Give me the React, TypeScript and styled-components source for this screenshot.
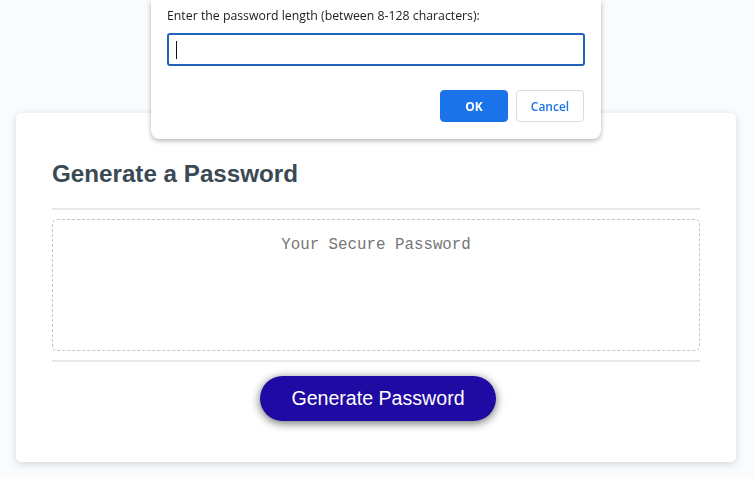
import React from "react";
import styled, { createGlobalStyle } from "styled-components";

const Global = createGlobalStyle`
  *, *::before, *::after { box-sizing: border-box; }
  html, body { margin: 0; padding: 0; }
  body {
    background: #f9fbfd;
    font-family: "Liberation Sans", Arial, sans-serif;
  }
`;

const Page = styled.div`
  padding: 113px 18px 14px 16px;
`;

const Card = styled.section`
  width: 720px;
  background: #ffffff;
  border-radius: 5px;
  box-shadow: rgba(0, 0, 0, 0.15) 0 2px 8px 0;
  padding: 47px 36px 41px;
  color: hsl(206, 17%, 28%);
`;

const Heading = styled.h2`
  margin: 0 0 20px;
  font-family: "Liberation Sans", Arial, sans-serif;
  font-size: 24.2px;
  line-height: 28px;
  font-weight: 700;
`;

const Divider = styled.div`
  height: 2px;
  background: #e7e9eb;
`;

const PasswordBox = styled.textarea`
  display: block;
  width: 100%;
  height: 132px;
  margin: 9px 0;
  padding: 15px 15px 0;
  border: 1px dashed #c0c7cf;
  border-radius: 5px;
  resize: none;
  overflow: hidden;
  text-align: center;
  font-family: "Liberation Mono", "DejaVu Sans Mono", monospace;
  font-size: 15.8px;
  line-height: 20px;
  color: #333;
  &::placeholder { color: #767676; }
`;

const Footer = styled.div`
  display: flex;
  justify-content: center;
  padding: 14px 0 0 4px;
`;

const GenerateButton = styled.button`
  border: none;
  background: #1f0aa3;
  border-radius: 25px;
  box-shadow: 0 2px 10px rgba(0, 0, 0, 0.6);
  color: #ffffff;
  font-family: "Liberation Sans", Arial, sans-serif;
  font-size: 19.6px;
  line-height: 23px;
  padding: 11px 31px;
  cursor: pointer;
`;

const Dialog = styled.div`
  position: fixed;
  top: 0;
  left: 151px;
  width: 450px;
  background: #ffffff;
  border-radius: 0 0 8px 8px;
  box-shadow: 0 2px 5px rgba(0, 0, 0, 0.28), 0 0 1px rgba(0, 0, 0, 0.2);
  padding: 7px 16px 17px;
  font-family: "Open Sans", "Noto Sans", sans-serif;
`;

const DialogText = styled.div`
  font-size: 12.3px;
  line-height: 18px;
  color: #202124;
`;

const DialogInput = styled.div`
  margin-top: 8px;
  height: 33px;
  border: 2px solid #1f64b8;
  border-radius: 3px;
  display: flex;
  align-items: center;
  padding-left: 7px;
`;

const Caret = styled.span`
  width: 1px;
  height: 18px;
  background: #111;
`;

const DialogActions = styled.div`
  display: flex;
  justify-content: flex-end;
  gap: 8px;
  margin-top: 24px;
  padding-right: 1px;
`;

const DialogButton = styled.button<{ $primary?: boolean }>`
  width: 68px;
  height: 32px;
  border-radius: 4px;
  font-family: "Open Sans", "Noto Sans", sans-serif;
  font-size: 12px;
  font-weight: ${(p) => (p.$primary ? 700 : 600)};
  color: ${(p) => (p.$primary ? "#ffffff" : "#1a73e8")};
  background: ${(p) => (p.$primary ? "#1a73e8" : "#ffffff")};
  border: 1px solid ${(p) => (p.$primary ? "#1a73e8" : "#dadce0")};
  padding: 0;
  cursor: pointer;
`;

export default function App() {
  return (
    <>
      <Global />
      <Page>
        <Card>
          <Heading>Generate a Password</Heading>
          <Divider />
          <PasswordBox readOnly placeholder="Your Secure Password" aria-label="Generated Password" />
          <Divider />
          <Footer>
            <GenerateButton>Generate Password</GenerateButton>
          </Footer>
        </Card>
      </Page>
      <Dialog>
        <DialogText>Enter the password length (between 8-128 characters):</DialogText>
        <DialogInput>
          <Caret />
        </DialogInput>
        <DialogActions>
          <DialogButton $primary>OK</DialogButton>
          <DialogButton>Cancel</DialogButton>
        </DialogActions>
      </Dialog>
    </>
  );
}
